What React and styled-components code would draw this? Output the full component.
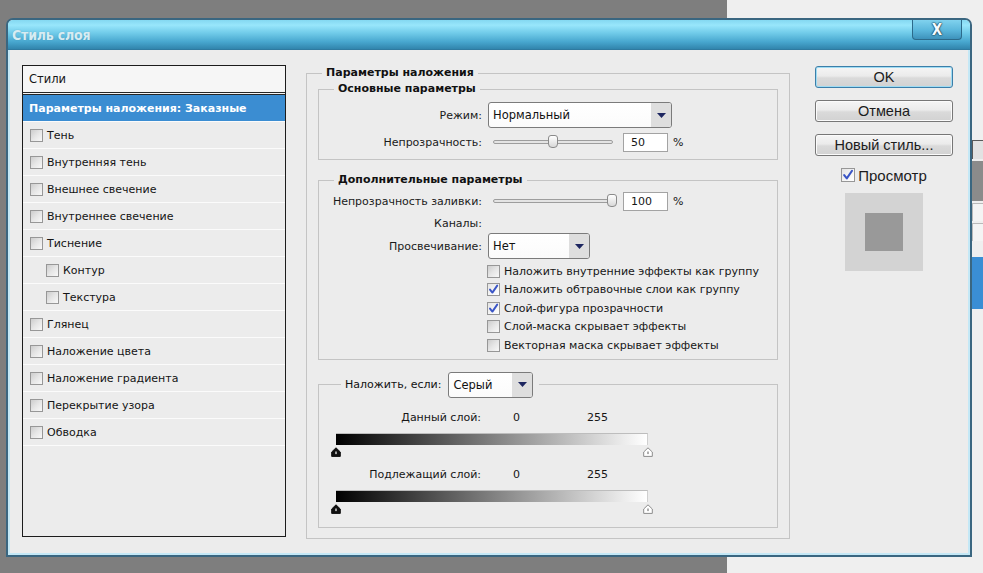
import React from "react";
import styled, { createGlobalStyle } from "styled-components";

const GlobalStyle = createGlobalStyle`
  html, body { margin: 0; padding: 0; }
  body { width: 983px; height: 573px; overflow: hidden; background: #efefef; }
`;

const UI = `"DejaVu Sans", Verdana, sans-serif`;
const BTN = `"Liberation Sans", Arial, sans-serif`;

const Screen = styled.div`
  width: 983px;
  height: 573px;
  display: flex;
  align-items: flex-start;
  background: linear-gradient(to right, #7e7e7e 0, #7e7e7e 727px, #efefef 727px);
  font-family: ${UI};
  font-size: 11px;
  color: #161616;
`;

const Dialog = styled.div`
  margin: 18px 0 0 6px;
  width: 966px;
  height: 539px;
  box-sizing: border-box;
  display: flex;
  flex-direction: column;
  border: 2px solid #3a6680;
  border-radius: 7px 7px 0 0;
  overflow: hidden;
  background: #ececec;
  flex: none;
`;

const TitleBar = styled.div`
  height: 30px;
  flex: none;
  display: flex;
  align-items: center;
  padding-left: 4px;
  background: linear-gradient(to bottom, #84d8f1 0%, #98e6fb 18%, #70cbe9 45%, #48a7cf 75%, #3185ad 100%);
  border-bottom: 1px solid #2f7aa0;
  box-sizing: border-box;
`;

const Title = styled.div`
  flex: 1;
  font-family: "DejaVu Sans Condensed", "Liberation Sans Narrow", sans-serif;
  font-weight: bold;
  font-size: 14px;
  color: #d6ecf3;
  text-shadow: 0 0 1px rgba(40, 90, 120, 0.35);
  letter-spacing: -0.2px;
`;

const CloseButton = styled.div`
  align-self: flex-start;
  margin-right: 8px;
  width: 50px;
  height: 20px;
  box-sizing: border-box;
  border: 1px solid #2c6a8a;
  border-top: none;
  border-radius: 0 0 4px 4px;
  background: linear-gradient(to bottom, #80d2ee 0%, #5ab6db 55%, #3d92bb 100%);
  display: flex;
  align-items: center;
  justify-content: center;
  font-family: "DejaVu Sans Condensed", sans-serif;
  font-weight: bold;
  font-size: 15px;
  color: #f4fbff;
  text-shadow: 0 0 1px #123a50, 0 0 1px #123a50, 0 0 2px #123a50;
`;

const Body = styled.div`
  flex: 1;
  display: flex;
  align-items: flex-start;
  box-sizing: border-box;
  border: 2px solid #c4e8f6;
  border-top: none;
  padding: 15px 0 0 12px;
`;

/* ---------- left list ---------- */

const StyleList = styled.div`
  width: 264px;
  height: 472px;
  box-sizing: border-box;
  border: 1px solid #1c1c1c;
  background: #ececec;
  display: flex;
  flex-direction: column;
  flex: none;
`;

const ListHeader = styled.div`
  height: 26px;
  display: flex;
  align-items: center;
  padding-left: 6px;
  background: #f6f6f6;
  border-bottom: 3px double #262626;
  font-size: 11.5px;
`;

const ListItem = styled.div`
  height: 26px;
  flex: none;
  display: flex;
  align-items: center;
  gap: 4px;
  padding-left: ${(p) => (p.$selected ? 6 : 7 + p.$indent * 16)}px;
  border-bottom: 1px solid #fbfbfb;
  background: ${(p) => (p.$selected ? "#3b8dd2" : "#ececec")};
  color: ${(p) => (p.$selected ? "#ffffff" : "#141414")};
  font-weight: ${(p) => (p.$selected ? "bold" : "normal")};
  white-space: nowrap;
`;

/* ---------- checkbox ---------- */

const Box = styled.span`
  width: ${(p) => p.$size}px;
  height: ${(p) => p.$size}px;
  box-sizing: border-box;
  flex: none;
  border: 1px solid #979797;
  background: ${(p) =>
    p.$checked
      ? "linear-gradient(135deg, #e4e4e4 0%, #f6f6f6 60%, #ffffff 100%)"
      : "linear-gradient(135deg, #cdcdcd 0%, #e6e6e6 50%, #f8f8f8 100%)"};
  display: inline-flex;
  align-items: center;
  justify-content: center;
  margin-left: ${(p) => p.$ml || 0}px;
`;

function Check({ checked, size = 13, ml }) {
  return (
    <Box $size={size} $checked={checked} $ml={ml}>
      {checked && (
        <svg width={size - 2} height={size - 2} viewBox="0 0 11 11">
          <path d="M2 5.6 L4.4 8.6 L9.2 1.6" stroke="#3a55c6" strokeWidth="1.9" fill="none" strokeLinecap="round" strokeLinejoin="round" />
        </svg>
      )}
    </Box>
  );
}

/* ---------- middle ---------- */

const Middle = styled.div`
  width: 484px;
  margin-left: 20px;
  margin-top: 1px;
  flex: none;
`;

const Field = styled.fieldset`
  margin: ${(p) => p.$mt || 0}px 0 0 0;
  padding: 0;
  min-width: 0;
  border: 1px solid #c4c4c4;
  box-sizing: border-box;
`;

const Legend = styled.legend`
  margin-left: ${(p) => (p.$offset == null ? 15 : p.$offset)}px;
  padding: ${(p) => p.$pad || "0 4px"};
  font-weight: bold;
  line-height: 14px;
  color: #111;
`;

const LegendRow = styled.div`
  display: flex;
  align-items: center;
  gap: 7px;
  font-weight: normal;
`;

const FieldBody = styled.div`
  display: flex;
  flex-direction: column;
  padding: ${(p) => p.$pad};
`;

const FormRow = styled.div`
  display: grid;
  grid-template-columns: 163px auto;
  column-gap: 6px;
  align-items: center;
  height: ${(p) => p.$h}px;
  margin-top: ${(p) => p.$mt || 0}px;
`;

const Label = styled.span`
  text-align: right;
  white-space: nowrap;
  color: #1a1a1a;
`;

const Controls = styled.div`
  display: flex;
  align-items: center;
`;

const SelectBox = styled.div`
  width: ${(p) => p.$w}px;
  height: 26px;
  box-sizing: border-box;
  border: 1px solid #7b7b7b;
  border-radius: 3px;
  background: linear-gradient(to bottom, #ffffff 0%, #fbfbfb 100%);
  display: flex;
  overflow: hidden;
  flex: none;
`;

const SelectText = styled.span`
  flex: 1;
  display: flex;
  align-items: center;
  padding-left: 4px;
  color: #111;
  font-size: 11.5px;
`;

const SelectArrow = styled.span`
  width: 20px;
  background: #dedede;
  display: flex;
  align-items: center;
  justify-content: center;
`;

function Select({ value, width }) {
  return (
    <SelectBox $w={width}>
      <SelectText>{value}</SelectText>
      <SelectArrow>
        <svg width="9" height="5" viewBox="0 0 9 5">
          <path d="M0 0 H9 L4.5 5 Z" fill="#1d2660" />
        </svg>
      </SelectArrow>
    </SelectBox>
  );
}

const SliderTrack = styled.div`
  position: relative;
  width: 120px;
  height: 4px;
  box-sizing: border-box;
  margin-left: 5px;
  border: 1px solid #9d9d9d;
  border-radius: 3px;
  background: #e4e4e4;
  flex: none;
`;

const SliderThumb = styled.div`
  position: absolute;
  top: -6px;
  left: ${(p) => p.$value * 1.18 - 5}px;
  width: 10px;
  height: 13px;
  box-sizing: border-box;
  border: 1px solid #8a8a8a;
  border-radius: 3px 3px 4px 4px;
  background: linear-gradient(to bottom, #ffffff, #d8d8d8);
`;

const NumberBox = styled.div`
  width: 45px;
  height: 19px;
  box-sizing: border-box;
  margin-left: 10px;
  border: 1px solid #a3a3a3;
  background: #fff;
  padding-left: 7px;
  display: flex;
  align-items: center;
  flex: none;
`;

const Percent = styled.span`
  margin-left: 5px;
`;

function Slider({ value }) {
  return (
    <Controls>
      <SliderTrack>
        <SliderThumb $value={value} />
      </SliderTrack>
      <NumberBox>{value}</NumberBox>
      <Percent>%</Percent>
    </Controls>
  );
}

const CheckList = styled.div`
  display: flex;
  flex-direction: column;
`;

const CheckRow = styled.div`
  height: 18.5px;
  display: flex;
  align-items: center;
  gap: 4px;
  white-space: nowrap;
`;

const LevelRow = styled.div`
  height: 16px;
  display: flex;
  align-items: center;
  margin-top: ${(p) => p.$mt || 0}px;
`;

const LevelLabel = styled.span`
  width: 145px;
  text-align: right;
  flex: none;
`;

const LevelValue = styled.span`
  width: ${(p) => p.$w}px;
  margin-left: ${(p) => p.$ml || 0}px;
  flex: none;
`;

const GradientBar = styled.div`
  width: 312px;
  height: 12px;
  box-sizing: border-box;
  margin-top: 7px;
  border-top: 1px solid #bdbdbd;
  border-right: 1px solid #cfcfcf;
  background: linear-gradient(to right, #000000 0%, #ffffff 100%);
`;

const MarkerRow = styled.div`
  width: 322px;
  height: 10px;
  margin: 2px 0 0 -5px;
  display: flex;
  justify-content: space-between;
`;

function Marker({ dark }) {
  return (
    <svg width="10" height="10" viewBox="0 0 10 10">
      <path
        d="M5 0.8 L9.3 5 V9.4 H0.7 V5 Z"
        fill={dark ? "#111" : "#fff"}
        stroke={dark ? "#111" : "#8c8c8c"}
        strokeWidth="1"
        strokeLinejoin="round"
      />
      <rect x="4.4" y="4.5" width="1.2" height="2.6" fill={dark ? "#fff" : "#7a7a7a"} />
    </svg>
  );
}

/* ---------- right column ---------- */

const Side = styled.div`
  width: 138px;
  margin-left: 25px;
  margin-top: 1px;
  flex: none;
  display: flex;
  flex-direction: column;
  align-items: center;
`;

const Button = styled.div`
  width: 138px;
  height: 22px;
  box-sizing: border-box;
  margin-top: ${(p) => p.$mt || 0}px;
  border: 1px solid ${(p) => (p.$default ? "#3b7ea9" : "#777")};
  border-radius: 3px;
  box-shadow: ${(p) => (p.$default ? "inset 0 0 0 1px #9fdcf3" : "inset 0 0 0 1px #fbfbfb")};
  background: linear-gradient(to bottom, #f5f5f5 0%, #ebebeb 45%, #dadada 55%, #d2d2d2 100%);
  display: flex;
  align-items: center;
  justify-content: center;
  font-family: ${BTN};
  font-size: 14.5px;
  color: #1c1c1c;
`;

const PreviewToggle = styled.div`
  margin-top: 11px;
  height: 16px;
  display: flex;
  align-items: center;
  gap: 3px;
  font-family: ${BTN};
  font-size: 15px;
  color: #1c1c1c;
`;

const PreviewSwatch = styled.div`
  margin-top: 10px;
  width: 78px;
  height: 78px;
  background: #d3d3d3;
  display: flex;
  align-items: center;
  justify-content: center;
`;

const PreviewInner = styled.div`
  width: 38px;
  height: 38px;
  background: #999999;
`;

/* ---------- background window strip ---------- */

const BackStrip = styled.div`
  width: 11px;
  height: 573px;
  flex: none;
  display: flex;
  flex-direction: column;
`;

const StripPiece = styled.div`
  height: ${(p) => p.$h}px;
  margin-top: ${(p) => p.$mt || 0}px;
  background: ${(p) => p.$bg || "transparent"};
  border-top: ${(p) => (p.$line ? `1px solid ${p.$line}` : "none")};
  border-left: ${(p) => (p.$line ? `1px solid ${p.$line}` : "none")};
`;

const styles = [
  { label: "Тень", indent: 0 },
  { label: "Внутренняя тень", indent: 0 },
  { label: "Внешнее свечение", indent: 0 },
  { label: "Внутреннее свечение", indent: 0 },
  { label: "Тиснение", indent: 0 },
  { label: "Контур", indent: 1 },
  { label: "Текстура", indent: 1 },
  { label: "Глянец", indent: 0 },
  { label: "Наложение цвета", indent: 0 },
  { label: "Наложение градиента", indent: 0 },
  { label: "Перекрытие узора", indent: 0 },
  { label: "Обводка", indent: 0 },
];

const options = [
  { label: "Наложить внутренние эффекты как группу", checked: false },
  { label: "Наложить обтравочные слои как группу", checked: true },
  { label: "Слой-фигура прозрачности", checked: true },
  { label: "Слой-маска скрывает эффекты", checked: false },
  { label: "Векторная маска скрывает эффекты", checked: false },
];

export default function App() {
  return (
    <>
      <GlobalStyle />
      <Screen>
        <Dialog>
          <TitleBar>
            <Title>Стиль слоя</Title>
            <CloseButton>X</CloseButton>
          </TitleBar>
          <Body>
            <StyleList>
              <ListHeader>Стили</ListHeader>
              <ListItem $selected>Параметры наложения: Заказные</ListItem>
              {styles.map((s) => (
                <ListItem key={s.label} $indent={s.indent}>
                  <Check />
                  {s.label}
                </ListItem>
              ))}
            </StyleList>

            <Middle>
              <Field>
                <Legend>Параметры наложения</Legend>
                <FieldBody $pad="2px 11px 10px 11px">
                  <Field>
                    <Legend>Основные параметры</Legend>
                    <FieldBody $pad="6px 0 7px 0">
                      <FormRow $h={26}>
                        <Label>Режим:</Label>
                        <Controls>
                          <Select value="Нормальный" width={184} />
                        </Controls>
                      </FormRow>
                      <FormRow $h={20} $mt={4}>
                        <Label>Непрозрачность:</Label>
                        <Slider value={50} />
                      </FormRow>
                    </FieldBody>
                  </Field>

                  <Field $mt={13}>
                    <Legend>Дополнительные параметры</Legend>
                    <FieldBody $pad="4px 0 4px 0">
                      <FormRow $h={20}>
                        <Label>Непрозрачность заливки:</Label>
                        <Slider value={100} />
                      </FormRow>
                      <FormRow $h={18} $mt={3}>
                        <Label>Каналы:</Label>
                        <span />
                      </FormRow>
                      <FormRow $h={26} $mt={1}>
                        <Label>Просвечивание:</Label>
                        <Controls>
                          <Select value="Нет" width={102} />
                        </Controls>
                      </FormRow>
                      <FormRow $h={92.5} $mt={3}>
                        <span />
                        <CheckList>
                          {options.map((o) => (
                            <CheckRow key={o.label}>
                              <Check checked={o.checked} ml={-1} />
                              {o.label}
                            </CheckRow>
                          ))}
                        </CheckList>
                      </FormRow>
                    </FieldBody>
                  </Field>

                  <Field $mt={12}>
                    <Legend $offset={22} $pad="0 6px 0 4px">
                      <LegendRow>
                        <span>Наложить, если:</span>
                        <Select value="Серый" width={85} />
                      </LegendRow>
                    </Legend>
                    <FieldBody $pad="12px 0 13px 17px">
                      <LevelRow>
                        <LevelLabel>Данный слой:</LevelLabel>
                        <LevelValue $ml={32} $w={74}>0</LevelValue>
                        <LevelValue $w={40}>255</LevelValue>
                      </LevelRow>
                      <GradientBar />
                      <MarkerRow>
                        <Marker dark />
                        <Marker />
                      </MarkerRow>
                      <LevelRow $mt={10}>
                        <LevelLabel>Подлежащий слой:</LevelLabel>
                        <LevelValue $ml={32} $w={74}>0</LevelValue>
                        <LevelValue $w={40}>255</LevelValue>
                      </LevelRow>
                      <GradientBar />
                      <MarkerRow>
                        <Marker dark />
                        <Marker />
                      </MarkerRow>
                    </FieldBody>
                  </Field>
                </FieldBody>
              </Field>
            </Middle>

            <Side>
              <Button $default>OK</Button>
              <Button $mt={12}>Отмена</Button>
              <Button $mt={12}>Новый стиль...</Button>
              <PreviewToggle>
                <Check checked size={14} />
                Просмотр
              </PreviewToggle>
              <PreviewSwatch>
                <PreviewInner />
              </PreviewSwatch>
            </Side>
          </Body>
        </Dialog>
        <BackStrip>
          <StripPiece $h={18} $mt={140} $bg="#e2e2e2" $line="#5a5a5a" />
          <StripPiece $h={40} $mt={2} $bg="#8b8b8b" />
          <StripPiece $h={17} $mt={2} $bg="#f4f4f4" $line="#b9b9b9" />
          <StripPiece $h={17} $mt={2} $bg="#f4f4f4" $line="#b9b9b9" />
          <StripPiece $h={52} $mt={16} $bg="#3a8ed4" />
        </BackStrip>
      </Screen>
    </>
  );
}
